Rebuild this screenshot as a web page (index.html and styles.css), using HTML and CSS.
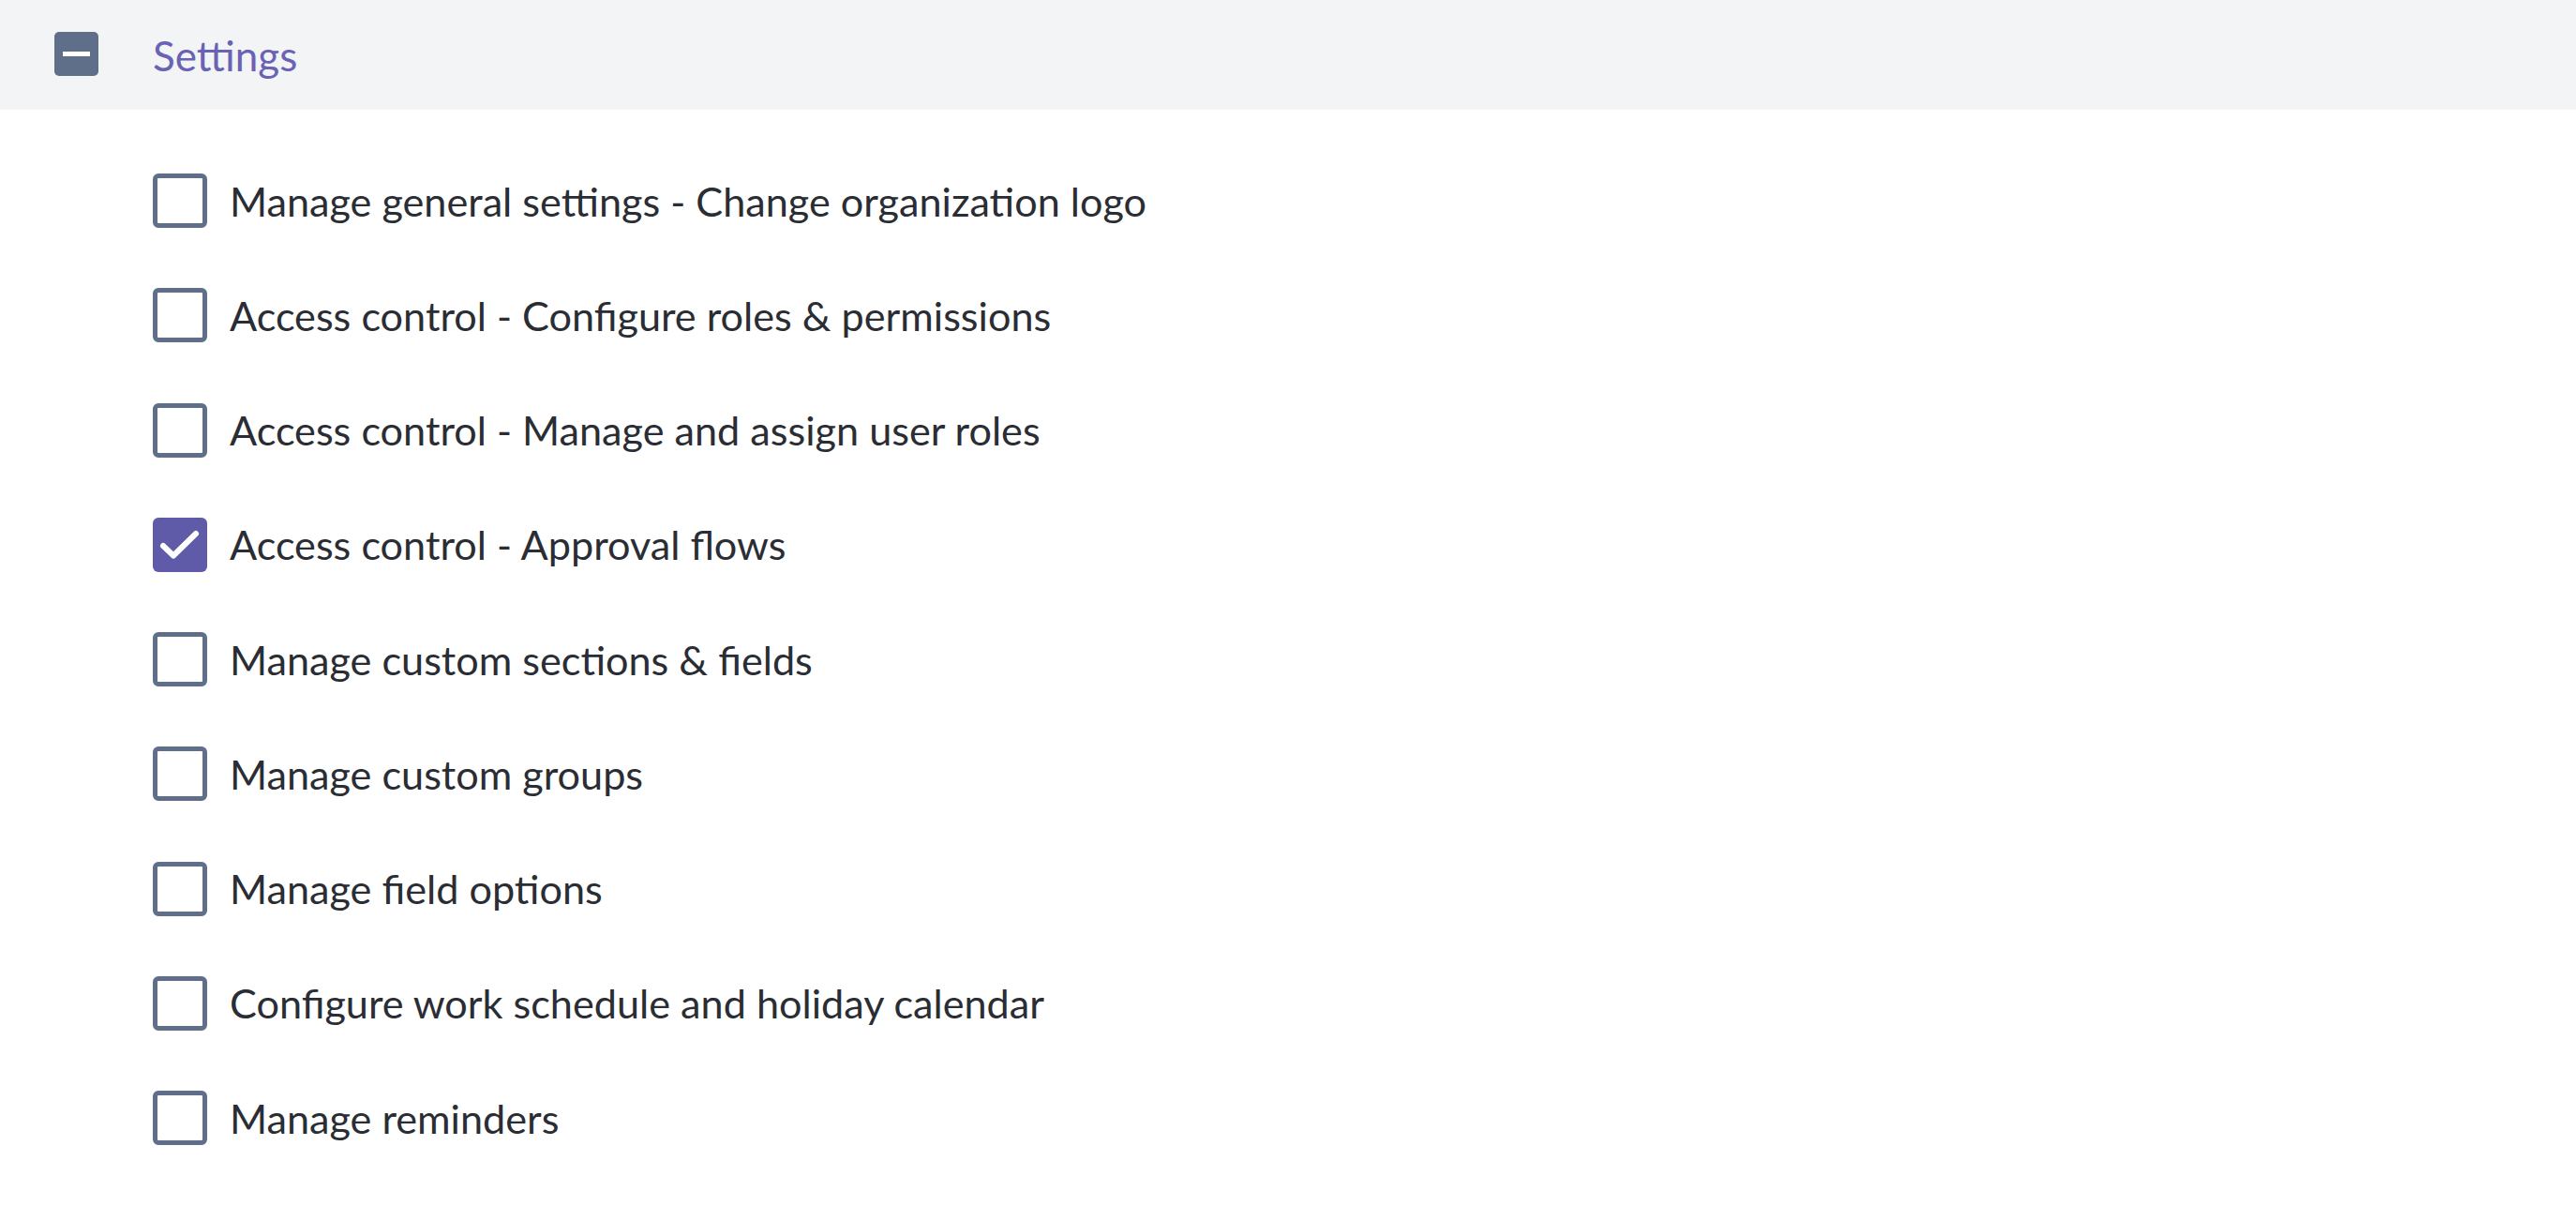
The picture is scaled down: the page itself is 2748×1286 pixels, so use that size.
FILE: index.html
```html
<!DOCTYPE html>
<html lang="en">
<head>
<meta charset="utf-8">
<title>Settings</title>
<link rel="stylesheet" href="styles.css">
</head>
<body>
<div class="panel">
  <div class="header">
    <span class="toggle"><span class="bar"></span></span>
    <span class="title">Settings</span>
  </div>
  <ul class="list">
    <li class="row"><span class="box"></span><span class="label">Manage general settings - Change organization logo</span></li>
    <li class="row"><span class="box"></span><span class="label">Access control - Configure roles &amp; permissions</span></li>
    <li class="row"><span class="box"></span><span class="label">Access control - Manage and assign user roles</span></li>
    <li class="row"><span class="box checked"><svg viewBox="0 0 58 58" width="58" height="58"><path d="M11 30 L22 40.5 L46 17" fill="none" stroke="#fff" stroke-width="6" stroke-linecap="round" stroke-linejoin="round"/></svg></span><span class="label">Access control - Approval flows</span></li>
    <li class="row"><span class="box"></span><span class="label">Manage custom sections &amp; fields</span></li>
    <li class="row"><span class="box"></span><span class="label">Manage custom groups</span></li>
    <li class="row"><span class="box"></span><span class="label">Manage field options</span></li>
    <li class="row"><span class="box"></span><span class="label">Configure work schedule and holiday calendar</span></li>
    <li class="row"><span class="box"></span><span class="label">Manage reminders</span></li>
  </ul>
</div>
</body>
</html>
```

FILE: styles.css
```css
html, body {
  margin: 0;
  padding: 0;
  background: #ffffff;
}
body {
  font-family: Lato, "Noto Sans", sans-serif;
  width: 2748px;
  height: 1286px;
  overflow: hidden;
}
.header {
  height: 117px;
  background: #f3f4f6;
  display: flex;
  align-items: center;
  padding-left: 58px;
  gap: 58px;
}
.toggle {
  width: 47px;
  height: 47px;
  border-radius: 5px;
  background: #5f6f89;
  display: flex;
  align-items: center;
  justify-content: center;
  margin-top: -2px;
}
.bar {
  width: 29px;
  height: 5px;
  background: #ffffff;
}
.title {
  font-size: 44px;
  color: #6a63b5;
  line-height: 1;
}
.list {
  list-style: none;
  margin: 0;
  padding: 36px 0 0 163px;
}
.row {
  height: 122.25px;
  display: flex;
  align-items: center;
  gap: 24px;
}
.box {
  width: 58px;
  height: 58px;
  box-sizing: border-box;
  border: 5px solid #5f6f89;
  border-radius: 6px;
  flex: none;
  display: block;
}
.box.checked {
  border: none;
  background: #5f5ba9;
}
.box.checked svg {
  display: block;
}
.label {
  font-size: 43.2px;
  color: #2a2d33;
  line-height: 1;
}
```
